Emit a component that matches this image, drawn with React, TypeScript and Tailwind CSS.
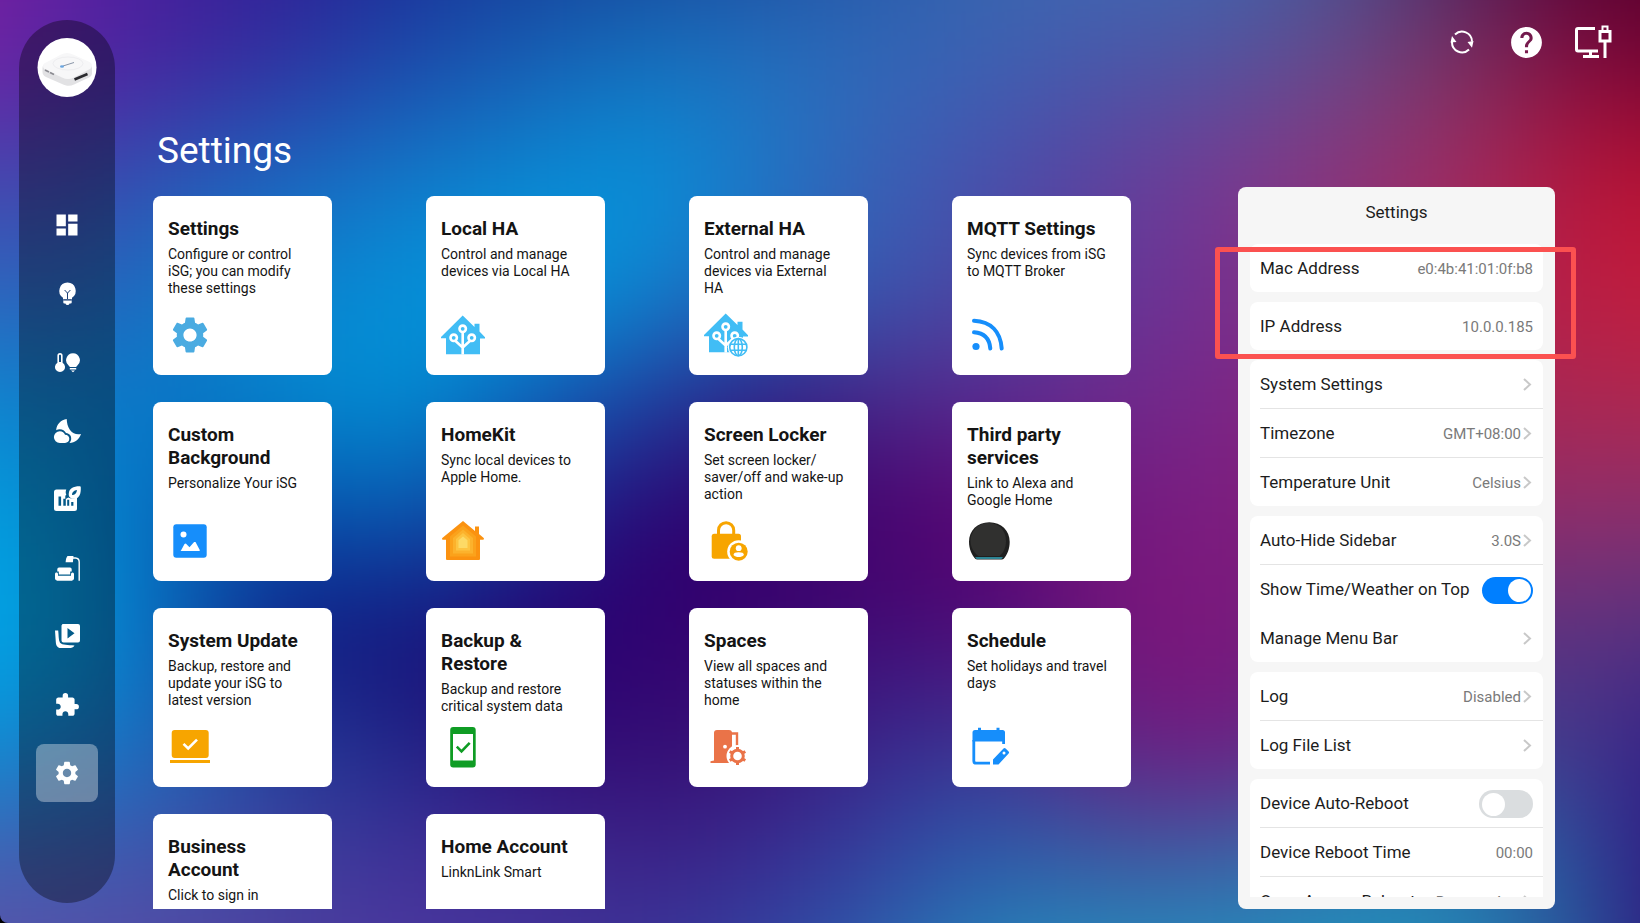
import React, { useState } from 'react';
import { MdDashboard, MdExtension, MdHelp, MdSettings } from 'react-icons/md';

// Wallpaper colours, row by row, blurred into one soft mesh.
// The outer ring lies past the edge of the page.
const MESH = [
  ['#80209c', '#6020a4', '#40209a', '#2c1f96', '#162f98', '#143f98', '#17459a', '#1e4c9e', '#2858a8', '#3a66ae', '#4068b2', '#3f66b0', '#48508c', '#4c2060', '#560030', '#500028'],
  ['#7a20a4', '#5a22a0', '#43229c', '#30309e', '#1d48a8', '#1a5cb2', '#1570bc', '#2470be', '#3068b8', '#3d62b2', '#4858aa', '#50549e', '#6a4888', '#78305e', '#7e0c40', '#6c0030'],
  ['#4848b0', '#4242aa', '#2d55b4', '#1c66be', '#1278c8', '#0c86d0', '#0494dc', '#1c76c6', '#3a60b4', '#4a4eac', '#60409c', '#7a3a90', '#8c3478', '#a02c62', '#b41438', '#b81030'],
  ['#3068c0', '#2f60b8', '#1673c4', '#0a84cf', '#0492da', '#009ce0', '#0e88d2', '#2868be', '#3a58b0', '#4b46a2', '#633698', '#763090', '#8f3078', '#a82558', '#c01c40', '#c41c3c'],
  ['#1088d0', '#0b80cc', '#0676c6', '#048ad0', '#0090d4', '#1060b8', '#1f3f9e', '#2e1c80', '#4b2787', '#5a2a90', '#6f2a8a', '#7a2488', '#902870', '#a42858', '#aa2850', '#b02850'],
  ['#00a0dc', '#0894da', '#0560b4', '#084aa8', '#0a58b0', '#1a2c8e', '#2a0070', '#330068', '#48006c', '#5a0070', '#741a7e', '#7d1c80', '#802070', '#902f6a', '#8a2e6e', '#8a3070'],
  ['#00a8e8', '#00a0e2', '#0a64b6', '#12127c', '#15147a', '#240070', '#300070', '#3a0470', '#420c74', '#4c0c78', '#781478', '#7c187c', '#702080', '#5a2f80', '#5a3480', '#503080'],
  ['#1090d4', '#1480cc', '#2064b6', '#273a98', '#1c2888', '#300c76', '#330c72', '#3a1678', '#38288c', '#3a3a98', '#661f80', '#701c80', '#5a3088', '#404090', '#44388a', '#2c1488'],
  ['#4860b0', '#4658ac', '#4450a8', '#40409c', '#44309a', '#403094', '#3c2488', '#382c92', '#3446a2', '#2a60ac', '#3860a6', '#3a64a8', '#2880b4', '#2480b4', '#2c4898', '#300c78'],
  ['#6050a8', '#5850a8', '#5848a4', '#503e9e', '#4c3aa0', '#44359c', '#3c389c', '#3048a4', '#2a68b0', '#2490bc', '#2296c0', '#2094c0', '#2094bc', '#2488b4', '#285898', '#300878'],
];

function Wallpaper() {
  return (
    <svg className="absolute inset-0 h-full w-full" viewBox="1 1 14 8" preserveAspectRatio="none" aria-hidden="true">
      <defs>
        <filter id="soften" filterUnits="userSpaceOnUse" x="-1" y="-1" width="18" height="12" colorInterpolationFilters="sRGB">
          <feGaussianBlur stdDeviation="0.55" />
        </filter>
      </defs>
      <g filter="url(#soften)" shapeRendering="crispEdges">
        {MESH.map((row, r) =>
          row.map((color, c) => {
            const x = c === 0 ? -1 : c;
            const y = r === 0 ? -1 : r;
            const w = c === 0 || c === 15 ? 2 : 1;
            const h = r === 0 || r === 9 ? 2 : 1;
            return <rect key={`${r}-${c}`} x={x} y={y} width={w} height={h} fill={color} />;
          }),
        )}
      </g>
    </svg>
  );
}

/* ---------- sidebar icons, 28 x 28 ---------- */

const NavSvg = ({ children }: { children: React.ReactNode }) => (
  <svg className="size-7" viewBox="0 0 28 28" fill="currentColor" aria-hidden="true">
    {children}
  </svg>
);

const BulbIcon = () => (
  <NavSvg>
    <path d="M14.500 2.500a8.300 8.300 0 0 0-4.500 15.200V19.500h9V17.700A8.300 8.300 0 0 0 14.500 2.500z" />
    <path d="M10.300 20.300h8.400v2.200a1 1 0 0 1-1 1h-1.100a2.200 2.200 0 0 1-4.200 0h-1.100a1 1 0 0 1-1-1z" />
    <path d="M11.600 10l2.900 3.100 2.900-3.100M14.500 13v6M10.300 19.900h8.400" fill="none" stroke="#1b3f75" strokeWidth="1" />
  </NavSvg>
);

const ThermoBulbIcon = () => (
  <NavSvg>
    <path
      fillRule="evenodd"
      d="M7 5a2.600 2.600 0 0 0-2.600 2.600v7.200a5 5 0 1 0 5.200 0V7.600A2.600 2.600 0 0 0 7 5zm0 1.700c.6 0 1 .4 1 1v6.300H6V7.700c0-.6.400-1 1-1z"
    />
    <path d="M20 5.200a7 7 0 0 0-4.200 12.500c.5.400.7.800.9 1.300h6.600c.2-.5.400-.9.900-1.300A7 7 0 0 0 20 5.200z" />
    <path d="M16.800 20h6.400v1.400h-6.400zM18 22.400h4l-2 1.900z" />
  </NavSvg>
);

const MoonCloudIcon = () => (
  <NavSvg>
    <path d="M13.700 2C8 3 3.500 7 3.200 13.200a6.500 6.500 0 0 1 3.500-1c3 0 5 1.500 6.300 3.800 3.500.3 5.500 3 5.200 6-.1 1.500-.8 2.800-1.700 4 5.500 0 9.500-3.500 11.500-9-4 1-8 0-11-4-2.500-3.500-3-7-3.300-11z" />
    <path d="M6.800 14.200c2.700 0 4.300 1.300 5.200 3.600 2.800 0 4.300 1.700 4.300 4S14.500 26 12 26H6.800a5.900 5.900 0 0 1 0-11.800z" />
  </NavSvg>
);

const ChartLeafIcon = () => (
  <NavSvg>
    <path
      fillRule="evenodd"
      d="M3.500 4.500h9.800c-.8 1.800-.8 3.600 0 5.200l-1 1v3h-2v7h2.500V14l2.500-1.500c2.600 1.500 5.800 1.400 8.700-.5v11.500a2.500 2.500 0 0 1-2.500 2.500h-18A2.500 2.500 0 0 1 1 23.500V7a2.500 2.500 0 0 1 2.500-2.500zM5.500 11.500v9.200h2.600v-9.200zM14.200 14.800v5.900h2v-5.900zM18.200 17v3.700h2.200V17z"
    />
    <path
      fillRule="evenodd"
      d="M26.500 1.200c.9 0 1.300.4 1.300 1.300.2 6.200-1.200 10.700-6.300 11.300-2 .2-3.400-.2-4.400-1.200-1.200-1.200-1.600-2.600-1.300-4.400C16.400 3.300 20 1.200 26.500 1.200zM19 10.100c2.800.1 4.600-1.700 5-5-3.300.5-5 2.200-5 5z"
    />
  </NavSvg>
);

const SofaLampIcon = () => (
  <NavSvg>
    <path d="M14.500 2h6l-.6 6.300H12.600c.2-2.800.7-4.900 1.900-6.300z" />
    <path d="M20 4h2.500a4 4 0 0 1 3.700 4v18.700" fill="none" stroke="currentColor" strokeWidth="1.400" />
    <path d="M6 13.500h11a1.700 1.700 0 0 1 1.700 1.700v2.300h-1.500v3H5.800v-3H4.300v-2.300A1.700 1.700 0 0 1 6 13.500z" />
    <path d="M3.500 18.500c.9 0 1.500.6 1.500 1.500v1.800h13V20a1.500 1.500 0 0 1 3 0v4.500a1.500 1.500 0 0 1-1.500 1.500v.7h-16V26A1.500 1.500 0 0 1 2 24.500V20c0-.9.600-1.500 1.500-1.500z" />
  </NavSvg>
);

const VideoIcon = () => (
  <NavSvg>
    <path fillRule="evenodd" d="M9.500 2h15.500a2 2 0 0 1 2 2v14.500a2 2 0 0 1-2 2H10.500a2 2 0 0 1-2-2V3.500zM14.500 6v10.500l7-5.200z" />
    <path d="M2 8.500h3.200c.6 4 .1 9.200 1.800 12.300 2.400 2.400 8 2.300 14.500 2.600-1 1.900-3 2.600-5.500 2.600H7.500C4.500 26 3 23.500 2.800 20z" />
  </NavSvg>
);

/* ---------- card icons, 44 x 44 ---------- */

const CardSvg = ({ children }: { children: React.ReactNode }) => (
  <svg className="size-11" viewBox="0 0 44 44" aria-hidden="true">
    {children}
  </svg>
);

const HouseTree = () => (
  <>
    <path fill="#41bdf5" d="M21.700 2.600 33.500 14v-3.200h5v7.800l5.500 5.600v1.200h-5V41.300H5v-16H0V24z" />
    <g fill="none" stroke="#fff" strokeWidth="2.600">
      <path d="M21.700 41.500V19M21.700 37.500V34.500L14 27.500M21.700 34.500l7.700-7" />
      <circle cx="21.700" cy="15.800" r="3.200" />
      <circle cx="12.700" cy="24.800" r="3.200" />
      <circle cx="30.700" cy="24.800" r="3.200" />
    </g>
  </>
);

const LocalHaIcon = () => (
  <CardSvg>
    <HouseTree />
  </CardSvg>
);

const ExternalHaIcon = () => (
  <CardSvg>
    <g transform="translate(0 -2)">
      <HouseTree />
    </g>
    <circle cx="34.300" cy="34.200" r="10.500" fill="#fff" />
    <g fill="none" stroke="#41bdf5" strokeWidth="1.600">
      <circle cx="34.300" cy="34.200" r="8.600" />
      <ellipse cx="34.300" cy="34.200" rx="4" ry="8.600" />
      <path d="M34.300 25.600v17.200M26.500 31.200h15.600M26.500 37.200h15.600" />
    </g>
  </CardSvg>
);

const FeedIcon = () => (
  <CardSvg>
    <circle cx="9" cy="33.500" r="3.600" fill="#168efb" />
    <path d="M7 19.300c10 .7 15.500 6.200 16.300 16.200M7 7.800c17 .9 26.500 10.700 27.700 27.700" fill="none" stroke="#168efb" strokeWidth="4" strokeLinecap="round" />
  </CardSvg>
);

const PictureIcon = () => (
  <CardSvg>
    <rect x="5.300" y="5.300" width="33.400" height="33.400" rx="3" fill="#168efb" />
    <circle cx="15.500" cy="15.500" r="3" fill="#fff" />
    <path d="M13 31.500 16.500 25l1.300-.4 3.700 3.600 4.600-5.300h1.400L32 31.500l-1 .5H12.500z" fill="#fff" />
  </CardSvg>
);

const HomeKitIcon = () => (
  <CardSvg>
    <path fill="#fb9210" d="M22 2 34 12V7.500h4V15l5 4.300-.5 1.500H39V40a1 1 0 0 1-1 1H6a1 1 0 0 1-1-1V20.800H1.400L1 19.300z" />
    <path fill="#fba21b" d="M22 6.500 35 17.500v20H9v-20z" />
    <path fill="#fcb22c" d="M22 10.500 32 19v15.500H12V19z" />
    <path fill="#fdc441" d="M22 14 29 20v11.500H15V20z" />
    <path fill="#fdda66" d="M22 17.500 26.500 21.200V29h-9v-7.800z" />
  </CardSvg>
);

const LockerIcon = () => (
  <CardSvg>
    <path d="M14.500 17v-5.700a7.600 7.600 0 0 1 15.200 0V17" fill="none" stroke="#f7a500" strokeWidth="3" />
    <rect x="7.700" y="14.800" width="29.300" height="25" rx="2.500" fill="#f7a500" />
    <circle cx="34.700" cy="32.700" r="11.500" fill="#fff" />
    <circle cx="34.700" cy="32.700" r="9" fill="#f7a500" />
    <circle cx="34.700" cy="29.200" r="2.900" fill="#fff" />
    <path d="M29.500 36c0-2 2-2.700 5.200-2.700s5.200.7 5.200 2.700c-1.300 1.400-3 2.100-5.200 2.100s-3.900-.7-5.200-2.100z" fill="#fff" />
  </CardSvg>
);

const SpeakerIcon = () => (
  <CardSvg>
    <path d="M22.300 3.200c12 0 20.400 8.400 20.400 19.600 0 7.200-2.600 13.700-6.200 17.200-1 .6-2 .6-3 .6h-22c-1 0-2 0-3-.6-3.600-3.500-6.500-10-6.500-17.200 0-11.200 8.300-19.600 20.300-19.600z" fill="#1f1f1f" />
    <path d="M21.500 4c11 0 17.500 8 17.500 18.300 0 6.500-3 12.200-6.500 14.700h-21c-4-2.500-8-8.500-8-15C3.500 12 11 4 21.500 4z" fill="#30302f" />
    <path d="M8 38h28l-1.500 2H9.500z" fill="#2c8494" />
  </CardSvg>
);

const UpdateIcon = () => (
  <CardSvg>
    <rect x="3.700" y="5" width="37" height="28" rx="3" fill="#f7a500" />
    <rect x="2" y="35" width="40" height="3" fill="#f7a500" />
    <path d="m15.500 18.800 4.700 4.700 8.800-8.800" fill="none" stroke="#fff" strokeWidth="2.600" />
  </CardSvg>
);

const BackupIcon = () => (
  <CardSvg>
    <rect x="9.200" y="2" width="25.500" height="40.500" rx="3" fill="#0f9c24" />
    <path d="M12 9h20v26.500H12z" fill="#fff" />
    <path d="m15.800 21.700 4.700 4.700 8.200-8.600" fill="none" stroke="#0f9c24" strokeWidth="2.600" />
  </CardSvg>
);

const SpacesIcon = () => (
  <CardSvg>
    <path d="M27 8.500h6V22" fill="none" stroke="#ea7348" strokeWidth="2.400" />
    <path d="M10 8a3 3 0 0 1 3-3h12a3 3 0 0 1 3 3v30H6.500v-1.800L10 35.600z" fill="#ea7348" />
    <circle cx="21" cy="21.700" r="1.900" fill="#fff" />
    <circle cx="33.500" cy="31" r="11" fill="#fff" />
    <circle cx="33.500" cy="31" r="5.800" fill="none" stroke="#ea7348" strokeWidth="3" />
    <path
      d="M33.500 22v3M33.500 37v3M25.700 26.500l2.600 1.500M38.700 34l2.600 1.500M41.300 26.500 38.700 28M28.300 34l-2.600 1.500"
      stroke="#ea7348"
      strokeWidth="3"
    />
  </CardSvg>
);

const ScheduleIcon = () => (
  <CardSvg>
    <path d="M8 5h27.500A2.500 2.500 0 0 1 38 7.500v9H5.500v-9A2.500 2.500 0 0 1 8 5z" fill="#168efb" />
    <path d="M12.500 2.800v5M31 2.800v5" stroke="#168efb" strokeWidth="3" />
    <path d="M6.800 15v21a2.200 2.200 0 0 0 2.200 2.200h14" fill="none" stroke="#168efb" strokeWidth="2.800" />
    <path d="m26 34.500 10.500-11a1.500 1.500 0 0 1 2.100 0l3 3a1.500 1.500 0 0 1 0 2.100L31.500 39.500H26z" fill="#168efb" />
    <circle cx="37" cy="28" r="1.500" fill="#fff" />
    <path d="M36.600 16v3" stroke="#168efb" strokeWidth="2.800" />
  </CardSvg>
);

const GearIcon = () => <MdSettings className="size-11 text-[#4aabe1]" />;

/* ---------- data ---------- */

const NAV_ITEMS: { label: string; icon: React.ReactNode; active?: boolean }[] = [
  { label: 'Dashboard', icon: <MdDashboard className="size-7" /> },
  { label: 'Lights', icon: <BulbIcon /> },
  { label: 'Climate', icon: <ThermoBulbIcon /> },
  { label: 'Night', icon: <MoonCloudIcon /> },
  { label: 'Energy', icon: <ChartLeafIcon /> },
  { label: 'Rooms', icon: <SofaLampIcon /> },
  { label: 'Media', icon: <VideoIcon /> },
  { label: 'Add-ons', icon: <MdExtension className="size-[26px]" /> },
  { label: 'Settings', icon: <MdSettings className="size-7" />, active: true },
];

const CARDS: { title: string; text: string; icon?: React.ReactNode }[] = [
  { title: 'Settings', text: 'Configure or control iSG; you can modify these settings', icon: <GearIcon /> },
  { title: 'Local HA', text: 'Control and manage devices via Local HA', icon: <LocalHaIcon /> },
  { title: 'External HA', text: 'Control and manage devices via External HA', icon: <ExternalHaIcon /> },
  { title: 'MQTT Settings', text: 'Sync devices from iSG to MQTT Broker', icon: <FeedIcon /> },
  { title: 'Custom Background', text: 'Personalize Your iSG', icon: <PictureIcon /> },
  { title: 'HomeKit', text: 'Sync local devices to Apple Home.', icon: <HomeKitIcon /> },
  { title: 'Screen Locker', text: 'Set screen locker/ saver/off and wake-up action', icon: <LockerIcon /> },
  { title: 'Third party services', text: 'Link to Alexa and Google Home', icon: <SpeakerIcon /> },
  { title: 'System Update', text: 'Backup, restore and update your iSG to latest version', icon: <UpdateIcon /> },
  { title: 'Backup & Restore', text: 'Backup and restore critical system data', icon: <BackupIcon /> },
  { title: 'Spaces', text: 'View all spaces and statuses within the home', icon: <SpacesIcon /> },
  { title: 'Schedule', text: 'Set holidays and travel days', icon: <ScheduleIcon /> },
  { title: 'Business Account', text: 'Click to sign in' },
  { title: 'Home Account', text: 'LinknLink Smart' },
];

type Row = {
  label: string;
  value?: string;
  kind: 'text' | 'link' | 'toggle';
  on?: boolean;
  noLine?: boolean;
};

const GROUPS: Row[][] = [
  [{ label: 'Mac Address', value: 'e0:4b:41:01:0f:b8', kind: 'text' }],
  [{ label: 'IP Address', value: '10.0.0.185', kind: 'text' }],
  [
    { label: 'System Settings', kind: 'link' },
    { label: 'Timezone', value: 'GMT+08:00', kind: 'link' },
    { label: 'Temperature Unit', value: 'Celsius', kind: 'link' },
  ],
  [
    { label: 'Auto-Hide Sidebar', value: '3.0S', kind: 'link' },
    { label: 'Show Time/Weather on Top', kind: 'toggle', on: true, noLine: true },
    { label: 'Manage Menu Bar', kind: 'link' },
  ],
  [
    { label: 'Log', value: 'Disabled', kind: 'link' },
    { label: 'Log File List', kind: 'link' },
  ],
  [
    { label: 'Device Auto-Reboot', kind: 'toggle' },
    { label: 'Device Reboot Time', value: '00:00', kind: 'text' },
    { label: 'Open App on Reboot', value: 'Browser App', kind: 'link' },
  ],
];

/* ---------- pieces ---------- */

function DeviceLogo() {
  return (
    <svg className="size-[60px]" viewBox="0 0 60 60" role="img" aria-label="iSG device">
      <circle cx="30" cy="29.500" r="29.500" fill="#fff" />
      <path d="M5.500 30c0-3 2-4 5-5.200L24 17.500c4-2 8-2 12 0l15 7c3 1.300 4 2.500 4 5v6c0 2-2 3.500-4 4.500l-14 6.500c-4 2-8 1.500-12-.5L9 39c-2.500-1.200-3.500-3-3.500-5z" fill="#e2e2e4" />
      <path d="M6 28c0-2 1.500-3 4.500-4.200L24 16.500c4-2 8-2 12 0l15 6.800c3 1.300 4 2.300 4 4.200s-1 3-4 4.500L37 39.500c-4 2-8 2-12 0l-15-7c-3-1.400-4-2.500-4-4.500z" fill="#f7f7f8" />
      <ellipse cx="31" cy="25.500" rx="15" ry="6.500" fill="none" stroke="#eeeef0" />
      <path d="m26 28 11-3.500" stroke="#8a96a8" strokeWidth="1" />
      <ellipse cx="25" cy="28.500" rx="2" ry="1.300" fill="#6aa6e0" />
      <path d="m8 32 4 2M13 34.500l4 2" stroke="#8c8c92" strokeWidth="1.800" />
      <path d="m37.500 41.500 13-5.500" stroke="#2a2a2e" strokeWidth="2.600" />
    </svg>
  );
}

function Sidebar() {
  return (
    <aside className="my-5 ml-[19px] flex w-24 shrink-0 flex-col items-center rounded-full bg-black/35 pt-[18px] pb-[101px]">
      <DeviceLogo />
      <nav className="mt-[98px] flex min-h-0 flex-1 flex-col justify-between">
        {NAV_ITEMS.map((item) => (
          <button
            key={item.label}
            aria-label={item.label}
            className={`flex h-[58px] w-[62px] items-center justify-center rounded-lg text-white ${item.active ? 'bg-white/35' : ''}`}
          >
            {item.icon}
          </button>
        ))}
      </nav>
    </aside>
  );
}

function TopBar() {
  return (
    <header className="flex justify-end gap-8 pt-[26px] pr-7 text-white">
      <button aria-label="Refresh" className="flex size-8 items-center justify-center">
        <svg className="size-6" viewBox="0 0 24 24" fill="none" stroke="currentColor" strokeWidth="2" aria-hidden="true">
          <path d="M5 4.500A10 10 0 0 1 22 11.500M19 19.500A10 10 0 0 1 2 12" />
          <path d="M.5 12.500 2 6l4.500 6z M23.500 11 22 17.800 17.500 12z" fill="currentColor" stroke="none" />
        </svg>
      </button>
      <button aria-label="Help" className="flex size-8 items-center justify-center">
        <MdHelp className="size-[37px] shrink-0" />
      </button>
      <button aria-label="Connection" className="flex h-8 w-[38px] items-center justify-center">
        <svg className="h-[34px] w-[38px] shrink-0" viewBox="0 0 38 34" fill="none" stroke="currentColor" strokeWidth="3" aria-hidden="true">
          <path d="M21 3.500H4A1.500 1.500 0 0 0 2.500 5v19.500A1.500 1.500 0 0 0 4 26h20M16.500 27v4M9 31.500h16" />
          <path d="M26 6.500h10v9.500h-10zM31 16v17" />
          <path d="M28.500 5V1.500h5V5" strokeWidth="2" />
        </svg>
      </button>
    </header>
  );
}

function Chevron() {
  return (
    <svg className="mr-px h-4 w-[10px]" viewBox="0 0 10 16" fill="none" stroke="#c8c8c8" strokeWidth="2" aria-hidden="true">
      <path d="m2 2 6 5.500-6 5.500" />
    </svg>
  );
}

function SettingRow({ row, last }: { row: Row; last: boolean }) {
  const [on, setOn] = useState(!!row.on);
  const line = last ? '' : row.noLine ? 'border-b border-white' : 'border-b border-[#e4e4e4]';
  const box = `ml-[10px] box-content flex h-[46px] items-center justify-between pt-[2px] pr-[10px] text-[17px] text-[#1c1c1c] ${line}`;

  if (row.kind === 'toggle') {
    return (
      <label className={box}>
        {row.label}
        <input
          type="checkbox"
          checked={on}
          onChange={(e) => setOn(e.target.checked)}
          className="flex h-7 w-[54px] shrink-0 appearance-none items-center rounded-full bg-[#dadddf] px-[3px] before:size-[23px] before:rounded-full before:bg-white checked:h-[27px] checked:w-[51px] checked:justify-end checked:bg-[#007fff] checked:px-[2px]"
        />
      </label>
    );
  }
  if (row.kind === 'link') {
    return (
      <div className={box}>
        <button className="flex h-full w-full items-center text-left">
          <span className="flex-1">{row.label}</span>
          <span className="mr-px text-[15px] text-[#7a7a7a]">{row.value}</span>
          <Chevron />
        </button>
      </div>
    );
  }
  return (
    <div className={box}>
      <span>{row.label}</span>
      <span className="text-[15px] text-[#7a7a7a]">{row.value}</span>
    </div>
  );
}

function SettingsPanel() {
  return (
    <section className="relative mt-[129px] mr-[85px] flex w-[317px] shrink-0 flex-col rounded-lg bg-[#f6f6f6] px-3 pb-3">
      <h2 className="h-[57px] shrink-0 pt-[13px] text-center text-[17px] leading-6 text-[#1c1c1c]">Settings</h2>
      <div className="flex min-h-0 flex-1 flex-col gap-[10px] overflow-hidden">
        {GROUPS.map((rows) => (
          <div key={rows[0].label} className="shrink-0 rounded-lg bg-white">
            {rows.map((row, i) => (
              <SettingRow key={row.label} row={row} last={i === rows.length - 1} />
            ))}
          </div>
        ))}
      </div>
      {/* highlight round the address rows */}
      <div className="pointer-events-none absolute top-[60px] -right-[21px] -left-[23px] h-[112px] rounded-[3px] border-[5px] border-[#fb5150]" />
    </section>
  );
}

const App: React.FC = () => {
  return (
    <div className="h-screen bg-black font-[Roboto,sans-serif]">
      <div className="relative flex h-full overflow-hidden rounded-bl-lg">
        <Wallpaper />
        <div className="relative flex min-w-0 flex-1">
          <Sidebar />
          <div className="flex min-w-0 flex-1 flex-col">
            <TopBar />
            <div className="flex min-h-0 flex-1 pb-[14px]">
              <main className="flex min-w-0 flex-1 flex-col pt-[72px] pr-[107px] pl-[38px]">
                <h1 className="pl-1 text-[37px] leading-[42px] text-white">Settings</h1>
                <div className="mt-6 grid min-h-0 flex-1 auto-rows-[179px] grid-cols-[273fr_263fr_263fr_179fr] gap-y-[27px] overflow-hidden">
                  {CARDS.map((card) => (
                    <button
                      key={card.title}
                      className="flex w-[179px] flex-col items-start rounded-lg bg-white pt-[21px] pr-[19px] pb-[18px] pl-[15px] text-left text-[#141414]"
                    >
                      <span className="text-[19px] leading-[23px] font-bold">{card.title}</span>
                      <span className="mt-[6px] text-sm leading-[17px]">{card.text}</span>
                      <span className="mt-auto">{card.icon}</span>
                    </button>
                  ))}
                </div>
              </main>
              <SettingsPanel />
            </div>
          </div>
        </div>
      </div>
    </div>
  );
};

export default App;
